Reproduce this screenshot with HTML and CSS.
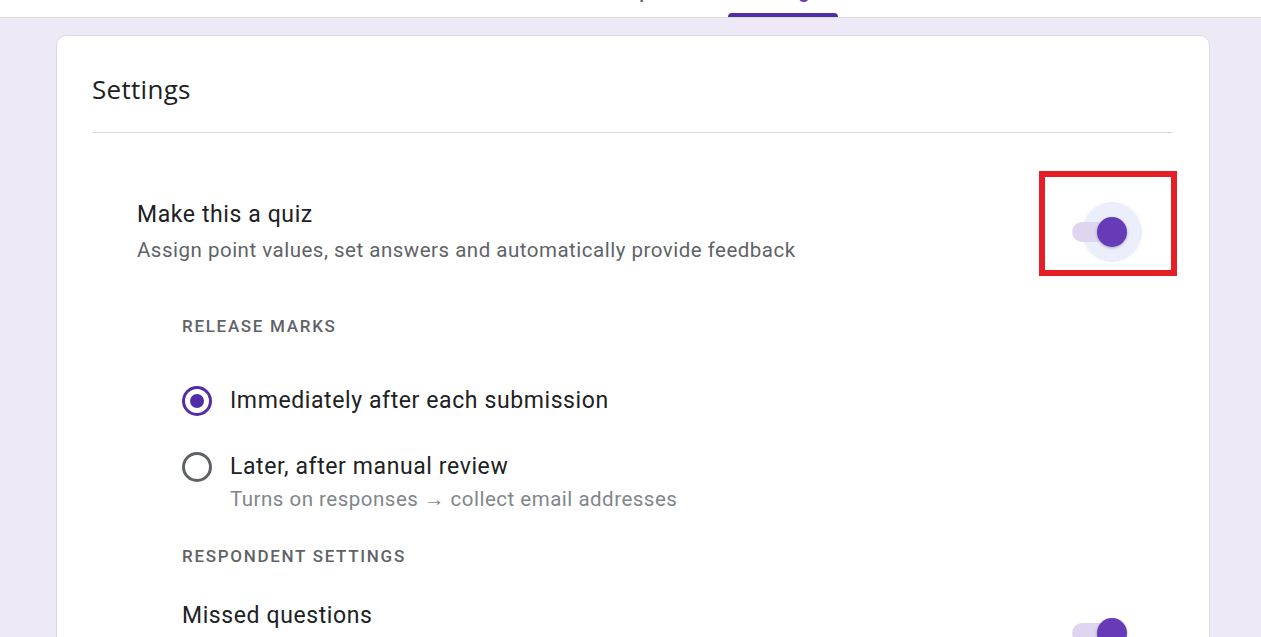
FILE: index.html
```html
<!DOCTYPE html>
<html lang="en">
<head>
  <meta charset="UTF-8">
  <title>Settings</title>
  <link rel="stylesheet" href="styles.css">
</head>
<body>
  <div class="topbar">
    <div class="tabs">
      <div class="tab">Questions</div>
      <div class="tab">Responses</div>
      <div class="tab active">Settings</div>
    </div>
  </div>

  <div class="main">
    <div class="card">
      <h2 class="card-title">Settings</h2>

      <div class="setting quiz">
        <div class="setting-text">
          <div class="setting-name">Make this a quiz</div>
          <div class="setting-desc">Assign point values, set answers and automatically provide feedback</div>
        </div>
        <div class="switch"><span class="halo"></span><span class="track"></span><span class="thumb"></span></div>
      </div>

      <div class="group">
        <div class="group-label">RELEASE MARKS</div>

        <label class="option">
          <span class="radio checked"></span>
          <span class="option-text">Immediately after each submission</span>
        </label>
        <label class="option later">
          <span class="radio"></span>
          <span class="option-text">Later, after manual review</span>
        </label>
        <div class="option-hint">Turns on responses &rarr; collect email addresses</div>

        <div class="group-label respondent">RESPONDENT SETTINGS</div>

        <div class="setting sub">
          <div class="setting-text">
            <div class="setting-name">Missed questions</div>
            <div class="setting-desc">Respondents can see which questions were answered incorrectly</div>
          </div>
          <div class="switch"><span class="track"></span><span class="thumb"></span></div>
        </div>
      </div>
    </div>
  </div>

  <div class="highlight"></div>
</body>
</html>
```

FILE: styles.css
```css
body {
  margin: 0;
  font-family: Roboto, "Noto Sans", Arial, sans-serif;
  background-color: #eee9f7;
  color: #202124;
  overflow: hidden;
}

.topbar {
  height: 17px;
  background: #fff;
  border-bottom: 1px solid #dadce0;
  overflow: hidden;
}

.tabs {
  display: flex;
  gap: 18px;
  padding-left: 472px;
  height: 17px;
  align-items: flex-end;
}

.tab {
  width: 110px;
  height: 37px;
  box-sizing: border-box;
  padding-bottom: 16px;
  display: flex;
  align-items: flex-end;
  justify-content: center;
  font-size: 20px;
  line-height: 20px;
  font-weight: 500;
  color: #5f6368;
  position: relative;
}

.tab.active {
  color: #673ab7;
}

.tab.active::after {
  content: "";
  position: absolute;
  left: 0;
  right: 0;
  bottom: 0;
  height: 4px;
  border-radius: 4px 4px 0 0;
  background: #512da8;
}

.main {
  padding: 17px 0 0 56px;
}

.card {
  width: 1154px;
  box-sizing: border-box;
  background: #fff;
  border: 1px solid #dadce0;
  border-radius: 10px;
  padding: 37px 36px 40px 35px;
  min-height: 700px;
}

.card-title {
  margin: 0;
  font-family: "Open Sans", Roboto, sans-serif;
  font-size: 26px;
  font-weight: 400;
  line-height: 32px;
  letter-spacing: 0.3px;
  padding-bottom: 27px;
  border-bottom: 1px solid #dadce0;
}

.setting {
  display: flex;
  align-items: center;
  justify-content: space-between;
}

.quiz {
  padding: 68px 45px 0 45px;
}

.setting-name {
  font-size: 23px;
  line-height: 28px;
  letter-spacing: 0.6px;
}

.setting-desc {
  margin-top: 8px;
  font-size: 20.5px;
  line-height: 26px;
  letter-spacing: 0.5px;
  color: #5f6368;
}

.switch {
  position: relative;
  width: 56px;
  height: 20px;
  flex-shrink: 0;
}

.halo {
  position: absolute;
  left: 10px;
  top: -20px;
  width: 60px;
  height: 60px;
  border-radius: 50%;
  background: #ebeffb;
}

.track {
  position: absolute;
  left: 0;
  top: 0;
  width: 48px;
  height: 20px;
  border-radius: 10px;
  background: #ded5ef;
}

.thumb {
  position: absolute;
  left: 25px;
  top: -5px;
  width: 30px;
  height: 30px;
  border-radius: 50%;
  background: #673ab7;
  box-shadow: 0 1px 3px rgba(0,0,0,0.3);
}

.group {
  padding-left: 90px;
}

.group-label {
  margin-top: 53px;
  font-size: 17px;
  line-height: 20px;
  font-weight: 500;
  letter-spacing: 1.7px;
  color: #5f6368;
}

.option {
  display: flex;
  align-items: center;
  gap: 18px;
  margin-top: 50px;
  height: 30px;
}

.option.later {
  margin-top: 36px;
}

.radio {
  width: 30px;
  height: 30px;
  box-sizing: border-box;
  border: 3px solid #5f6368;
  border-radius: 50%;
  display: flex;
  align-items: center;
  justify-content: center;
}

.radio.checked {
  border-color: #512da8;
}

.radio.checked::after {
  content: "";
  width: 14px;
  height: 14px;
  border-radius: 50%;
  background: #512da8;
}

.option-text {
  font-size: 23px;
  line-height: 30px;
  letter-spacing: 0.6px;
}

.option-hint {
  margin: 5px 0 0 48px;
  font-size: 20.5px;
  line-height: 24px;
  letter-spacing: 0.5px;
  color: #80868b;
}

.group-label.respondent {
  margin-top: 35px;
}

.sub {
  margin-top: 35px;
  padding-right: 45px;
}

.sub .setting-name {
  line-height: 30px;
}

.sub .setting-desc {
  margin-top: 8px;
}

.highlight {
  position: absolute;
  left: 1039px;
  top: 171px;
  width: 138px;
  height: 105px;
  box-sizing: border-box;
  border: 6px solid #e61e25;
}
```
